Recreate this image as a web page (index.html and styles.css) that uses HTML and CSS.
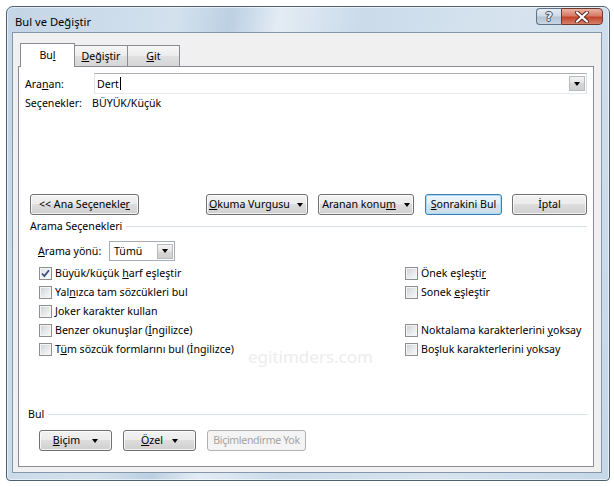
FILE: index.html
```html
<!DOCTYPE html>
<html lang="tr">
<head>
<meta charset="utf-8">
<title>Bul ve Değiştir</title>
<link rel="stylesheet" href="styles.css">
</head>
<body>
<div class="window">
  <div class="titlebar">
    <span class="title">Bul ve Değiştir</span>
    <div class="caption-btns">
      <div class="cbtn help"><span>?</span></div>
      <div class="cbtn close">
        <svg width="16" height="12" viewBox="0 0 16 12"><path d="M3 1.5 L13 10.5 M13 1.5 L3 10.5" stroke="#5a2a20" stroke-width="4" stroke-linecap="round"/><path d="M3 1.5 L13 10.5 M13 1.5 L3 10.5" stroke="#fff" stroke-width="2.2" stroke-linecap="round"/></svg>
      </div>
    </div>
  </div>
  <div class="client">
    <div class="tabs">
      <div class="tab active">Bu<u>l</u></div>
      <div class="tab"><u>D</u>eğiştir</div>
      <div class="tab"><u>G</u>it</div>
    </div>
    <div class="panel">
      <div class="search-row">
        <span class="lbl">Ara<u>n</u>an:</span>
        <div class="combo">
          <span class="value">Dert<span class="caret"></span></span>
          <span class="dd"><span class="tri"></span></span>
        </div>
      </div>
      <div class="options-row">
        <span class="lbl">Seçenekler:</span>
        <span>BÜYÜK/Küçük</span>
      </div>
      <div class="btn-row">
        <div class="btn b-less">&lt;&lt; Ana Seçenekle<u>r</u></div>
        <div class="spring"></div>
        <div class="btn b-okuma"><span><u>O</u>kuma Vurgusu</span><span class="tri"></span></div>
        <div class="btn b-konum"><span>Aranan konu<u>m</u></span><span class="tri"></span></div>
        <div class="btn b-next default"><span><u>S</u>onrakini Bul</span></div>
        <div class="btn b-cancel">İptal</div>
      </div>
      <div class="group-head"><span>Arama Seçenekleri</span><span class="rule"></span></div>
      <div class="dir-row">
        <span class="lbl"><u>A</u>rama yönü:</span>
        <div class="select"><span class="value">Tümü</span><span class="dd"><span class="tri"></span></span></div>
      </div>
      <div class="checks">
        <div class="chk"><span class="cb checked"><svg width="11" height="11" viewBox="0 0 11 11"><path d="M2 5.5 L4.3 8 L9 2.2" fill="none" stroke="#3b4f80" stroke-width="1.8"/></svg></span><span>Büyük/küçük <u>h</u>arf eşleştir</span></div>
        <div class="chk"><span class="cb"></span><span>Önek eşleşti<u>r</u></span></div>
        <div class="chk"><span class="cb"></span><span>Yal<u>n</u>ızca tam sözcükleri bul</span></div>
        <div class="chk"><span class="cb"></span><span>Sonek <u>e</u>şleştir</span></div>
        <div class="chk"><span class="cb"></span><span><u>J</u>oker karakter kullan</span></div>
        <div class="chk empty"></div>
        <div class="chk"><span class="cb"></span><span>Benzer okunuşlar (<u>İ</u>ngilizce)</span></div>
        <div class="chk"><span class="cb"></span><span>Noktalama karakterlerini <u>y</u>oksay</span></div>
        <div class="chk"><span class="cb"></span><span>T<u>ü</u>m sözcük formlarını bul (İngilizce)</span></div>
        <div class="chk"><span class="cb"></span><span>Boşluk karakterlerini yoksay</span></div>
      </div>
      <div class="watermark-wrap"><span class="watermark">egitimders.com</span></div>
      <div class="group-head bul-head"><span>Bul</span><span class="rule"></span></div>
      <div class="bottom-btns">
        <div class="btn b-bicim"><span><u>B</u>içim</span><span class="tri"></span></div>
        <div class="btn b-ozel"><span><u>Ö</u>zel</span><span class="tri"></span></div>
        <div class="btn b-yok disabled">Biçimlendirme Yok</div>
      </div>
    </div>
  </div>
</div>
</body>
</html>
```
FILE: styles.css
```css
* { box-sizing: border-box; }
html, body { margin: 0; padding: 0; background: #fff; }
body {
  font-family: "Noto Sans", "DejaVu Sans", sans-serif;
  font-size: 10.6px;
  color: #000;
}
u { text-decoration: underline; text-underline-offset: 1px; }

.window {
  margin: 6px 0 0 6px;
  width: 604px;
  height: 475px;
  border: 1px solid #4e6072;
  border-radius: 7px 7px 4px 4px;
  background: linear-gradient(100deg, #c3d5e6 0%, #d3e1ed 25%, #bcd0e3 33%, #e3ecf4 40%, #cbdbea 52%, #d7e4ef 75%, #c5d7e8 100%);
  box-shadow: inset 0 0 0 1px rgba(255,255,255,0.55);
  padding: 0 7px 7px 5px;
  display: flex;
  flex-direction: column;
}
.titlebar {
  height: 25px;
  display: flex;
  justify-content: space-between;
  align-items: flex-start;
}
.title {
  font-size: 11.2px;
  line-height: 15px;
  margin-top: 7px;
  margin-left: 3px;
}
.caption-btns {
  display: flex;
  margin-top: 1px;
  margin-right: -1px;
}
.cbtn {
  height: 17px;
  display: flex;
  align-items: center;
  justify-content: center;
  border: 1px solid #5f7185;
}
.help {
  width: 25px;
  border-right: 0;
  border-radius: 4px 0 0 4px;
  background: linear-gradient(#e4ebf2 0%, #d0dbe6 45%, #b4c3d3 55%, #c9d6e3 100%);
}
.help span {
  font-family: "DejaVu Sans", sans-serif;
  font-weight: bold;
  font-size: 12px;
  line-height: 12px;
  color: #eef2f7;
  text-shadow: -1px 0 #404b58, 1px 0 #404b58, 0 -1px #404b58, 0 1px #404b58;
}
.close {
  width: 42px;
  border-color: #6e3a30;
  border-radius: 0 4px 4px 0;
  background: linear-gradient(#eab3a6 0%, #d77b66 45%, #c2442a 55%, #d6826c 100%);
}

.client {
  flex: 1;
  background: #f0f0f0;
  border: 1px solid #8497ab;
  padding: 10px 7px 5px 5px;
  display: flex;
  flex-direction: column;
}
.tabs {
  display: flex;
  align-items: flex-end;
  height: 23px;
  margin-left: 2px;
}
.tab {
  height: 21px;
  border: 1px solid #898c95;
  border-bottom: 0;
  border-left: 0;
  background: linear-gradient(#f6f6f6 0%, #ececec 50%, #e0e0e0 50%, #d6d6d6 100%);
  display: flex;
  align-items: center;
  justify-content: center;
  line-height: 15px;
}
.tab:nth-child(2) { width: 53px; }
.tab:nth-child(3) { width: 52px; }
.tab.active {
  width: 55px;
  height: 24px;
  margin-bottom: -1px;
  border-left: 1px solid #898c95;
  background: #fff;
  position: relative;
  z-index: 1;
  padding-bottom: 1px;
}

.panel {
  flex: 1;
  background: #fff;
  border: 1px solid #898c95;
  display: flex;
  flex-direction: column;
}
.lbl { display: inline-block; }
.search-row {
  margin-top: 6px;
  height: 21px;
  display: flex;
  align-items: center;
  padding-left: 6px;
}
.search-row .lbl { width: 69px; }
.combo {
  width: 493px;
  height: 21px;
  border: 1px solid #abadb3;
  border-color: #abadb3 #dbdfe6 #e3e9ef #e2e3ea;
  display: flex;
  align-items: center;
  justify-content: space-between;
  padding: 0 1px 0 2px;
}
.value { display: flex; align-items: center; }
.caret { display: inline-block; width: 1px; height: 13px; background: #000; margin-left: 1px; }
.dd {
  width: 16px;
  height: 15px;
  border: 1px solid #b6b9bd;
  background: linear-gradient(#f4f4f4, #e2e2e2 50%, #d6d6d6 50%, #d0d0d0);
  display: flex;
  align-items: center;
  justify-content: center;
}
.tri {
  display: inline-block;
  width: 0;
  height: 0;
  border-left: 3.5px solid transparent;
  border-right: 3.5px solid transparent;
  border-top: 4px solid #000;
}
.options-row {
  margin-top: 2px;
  height: 15px;
  line-height: 15px;
  display: flex;
  padding-left: 6px;
}
.options-row .lbl { width: 67px; }

.btn-row {
  margin-top: 83px;
  display: flex;
  padding: 0 6px 0 11px;
}
.spring { flex: 1; }
.btn {
  height: 21px;
  border: 1px solid #707070;
  border-radius: 3px;
  background: linear-gradient(#f2f2f2 0%, #ebebeb 50%, #dddddd 50%, #cfcfcf 100%);
  box-shadow: inset 0 0 0 1px rgba(255,255,255,0.75);
  display: flex;
  align-items: center;
  justify-content: center;
  line-height: 15px;
  white-space: nowrap;
}
.b-less { width: 109px; }
.b-okuma { width: 102px; justify-content: space-between; padding: 0 4px 0 2px; }
.b-konum { width: 96px; gap: 8px; margin-left: 10px; }
.b-next { width: 77px; margin-left: 11px; }
.b-cancel { width: 75px; margin-left: 10px; }
.btn.default {
  border-color: #3c7fb1;
  box-shadow: inset 0 0 0 1px #a9dcf6;
  background: linear-gradient(#eef6fb 0%, #e3eef6 50%, #d5e4ef 50%, #cbdde9 100%);
}

.group-head {
  margin-top: 4px;
  height: 15px;
  line-height: 15px;
  display: flex;
  align-items: center;
  padding: 0 6px 0 11px;
}
.group-head .rule {
  flex: 1;
  height: 1px;
  background: #d5dfe5;
  margin-left: 4px;
}
.dir-row {
  margin-top: 7px;
  display: flex;
  align-items: center;
  padding-left: 19px;
}
.dir-row .lbl { width: 71px; }
.select {
  width: 66px;
  height: 20px;
  border: 1px solid #a5acb5;
  display: flex;
  align-items: center;
  justify-content: space-between;
  padding: 0 1px 0 4px;
}
.checks {
  margin-top: 3px;
  display: grid;
  grid-template-columns: 366px 1fr;
  grid-auto-rows: 19px;
  padding-left: 20px;
}
.chk {
  display: flex;
  align-items: center;
  gap: 3px;
  line-height: 15px;
}
.cb {
  width: 13px;
  height: 13px;
  border: 1px solid #8f8f8f;
  background: linear-gradient(135deg, #cbcfd3 0%, #e8e9ea 55%, #fafafa 100%);
  box-shadow: inset 0 0 0 1px #f4f4f4;
  display: flex;
  align-items: center;
  justify-content: center;
}
.cb.checked { background: linear-gradient(135deg, #dfe2e6 0%, #f2f3f4 60%, #fff 100%); }
.watermark-wrap {
  height: 0;
  position: relative;
}
.watermark {
  position: absolute;
  left: 229px;
  top: -12px;
  font-size: 17px;
  line-height: 20px;
  color: #ededed;
  white-space: nowrap;
}
.bul-head {
  margin-top: 48px;
  padding-left: 9px;
}
.bottom-btns {
  margin-top: 8px;
  display: flex;
  padding-left: 20px;
}
.b-bicim { width: 73px; gap: 12px; }
.b-ozel { width: 73px; gap: 9px; margin-left: 11px; }
.b-yok { width: 99px; margin-left: 11px; letter-spacing: -0.35px; }
.btn.disabled {
  color: #a3a3a3;
  border-color: #adb2b5;
  background: #f4f4f4;
  box-shadow: none;
}
```
